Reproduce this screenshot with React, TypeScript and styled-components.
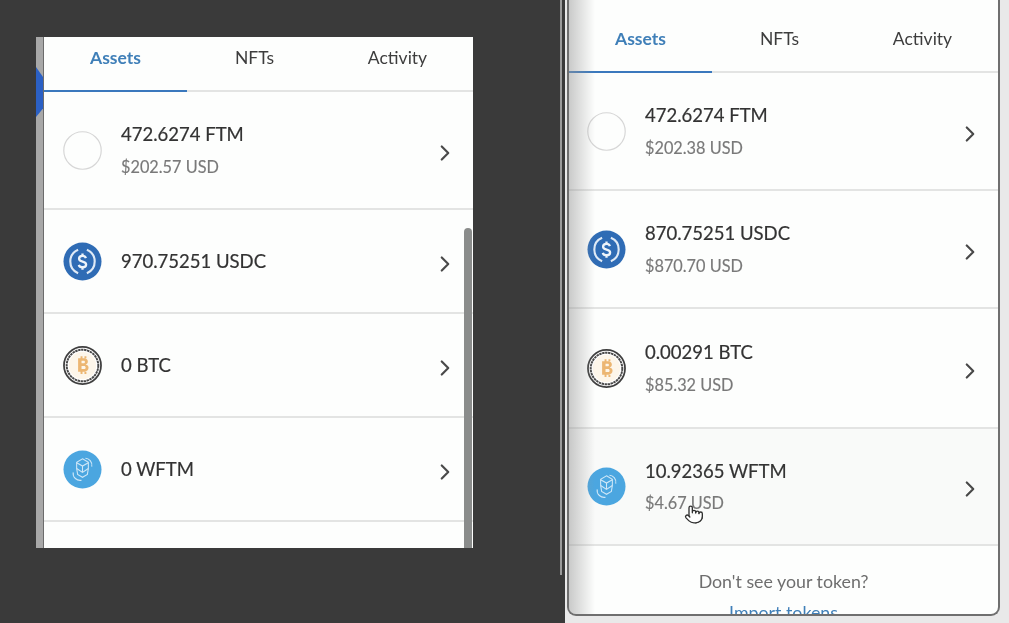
import React from "react";
import styled, { createGlobalStyle } from "styled-components";
import { ChevronRight, Pointer } from "lucide-react";

const Global = createGlobalStyle`
  html, body { margin: 0; padding: 0; width: 1009px; height: 623px; overflow: hidden; background: #3a3a3a; }
  body { font-family: "Lato", "Liberation Sans", sans-serif; }
`;

const Stage = styled.div`
  width: 1009px;
  height: 623px;
  display: flex;
  align-items: flex-start;
  overflow: hidden;
  background: #3a3a3a;
  filter: blur(0.35px);
`;

const LeftWindow = styled.div`
  position: relative;
  margin: 37px 0 0 36px;
  width: 437px;
  height: 511px;
  display: flex;
  background: #fdfefd;
  overflow: hidden;
`;

const Strip = styled.div`
  position: relative;
  flex: none;
  width: 8px;
  background: #a8a8a8;
  border-right: 1px solid #6c6c6c;
  box-sizing: border-box;
`;

const Blob = styled.div`
  position: absolute;
  left: 0;
  top: 30px;
  width: 7px;
  height: 50px;
  background: #2b60c4;
  clip-path: polygon(0 0, 100% 20%, 100% 83%, 0 100%);
`;

const Scrollbar = styled.div`
  position: absolute;
  right: 1px;
  top: 191px;
  bottom: 0;
  width: 8px;
  border-radius: 4px 4px 0 0;
  background: #8a8c8b;
`;

const Content = styled.div`
  flex: 1;
  min-width: 0;
`;

const Divider = styled.div`
  width: 2px;
  height: 575px;
  flex: none;
  margin-left: 87px;
  background: #9b9b9b;
`;

const RightSide = styled.div`
  flex: none;
  margin-left: 3px;
  width: 444px;
  height: 623px;
  background: #e9e9e9;
  padding-left: 2px;
  box-sizing: border-box;
`;

const RightWindow = styled.div`
  position: relative;
  width: 433px;
  height: 616px;
  box-sizing: border-box;
  background: #fdfefd;
  border: 2px solid #6f6f6f;
  border-top: none;
  border-radius: 0 0 9px 9px;
  overflow: hidden;
`;

const Shade = styled.div`
  position: absolute;
  left: 0;
  top: 0;
  bottom: 0;
  width: 26px;
  background: linear-gradient(90deg, rgba(150, 150, 150, 0.5), rgba(255, 255, 255, 0));
  pointer-events: none;
`;

const Tabs = styled.div<{ $h: number }>`
  display: grid;
  grid-template-columns: 143px 135px 1fr;
  height: ${(p) => p.$h}px;
  box-sizing: border-box;
  border-bottom: 2px solid #e3e4e3;
`;

const Tab = styled.div<{ $active?: boolean; $shift: number }>`
  display: flex;
  align-items: center;
  justify-content: center;
  box-sizing: border-box;
  padding-top: ${(p) => Math.max(p.$shift, 0)}px;
  padding-bottom: ${(p) => Math.max(-p.$shift, 0)}px;
  margin-bottom: -2px;
  font-size: 17.5px;
  color: ${(p) => (p.$active ? "#3f7fb8" : "#3d3d3d")};
  font-weight: ${(p) => (p.$active ? 700 : 400)};
  border-bottom: 2px solid ${(p) => (p.$active ? "#3a78bd" : "transparent")};
`;

const Row = styled.div<{ $h: number; $tint?: boolean; $pad: number }>`
  display: flex;
  align-items: center;
  height: ${(p) => p.$h}px;
  box-sizing: border-box;
  padding: 0 19px 0 ${(p) => p.$pad}px;
  gap: 19px;
  border-bottom: 2px solid #e3e4e3;
  background: ${(p) => (p.$tint ? "#f9faf9" : "transparent")};
`;

const TokenIcon = styled.svg`
  flex: none;
  width: 39px;
  height: 39px;
`;

const Info = styled.div`
  flex: 1;
  min-width: 0;
  display: flex;
  flex-direction: column;
  gap: 11.5px;
`;

const Amount = styled.div`
  font-size: 18.5px;
  line-height: 22px;
  color: #333;
  -webkit-text-stroke: 0.2px #333;
`;

const Usd = styled.div`
  font-size: 16.3px;
  line-height: 20px;
  color: #797979;
  -webkit-text-stroke: 0.15px #797979;
`;

const Arrow = styled(ChevronRight)`
  flex: none;
  width: 26px;
  height: 26px;
  color: #4a4a4a;
  margin: 5px -4px 0 0;
`;

const Footer = styled.div`
  display: flex;
  flex-direction: column;
  align-items: center;
  gap: 11px;
  padding-top: 25px;
`;

const Hint = styled.div`
  font-size: 17.8px;
  line-height: 20px;
  color: #6e6e6e;
`;

const Link = styled.div`
  font-size: 17.8px;
  line-height: 20px;
  color: #3f7fb8;
`;

const Cursor = styled(Pointer)`
  position: absolute;
  left: 115px;
  top: 503px;
  width: 20px;
  height: 23px;
  color: #2f2f2f;
  fill: #fff;
`;

const Fantom = () => (
  <TokenIcon viewBox="0 0 40 40">
    <circle cx="20" cy="20" r="19.5" fill="#4ba6e0" />
    <g fill="none" stroke="#cfe7f7" strokeWidth="1.1">
      <path d="M20 9l6 3.500v6.500l-1 6-5 3-5-3-1-6v-6.500z" />
      <path d="M14 13l6 3.500 6-3.500M20 16.500V23M14 19l6 4 6-4" />
      <path d="M10.500 23c-1 5 4 9 8.500 8M29.500 17c1-5-3-8.500-6.500-8.500" />
    </g>
  </TokenIcon>
);

const Usdc = () => (
  <TokenIcon viewBox="0 0 40 40">
    <circle cx="20" cy="20" r="19.5" fill="#2f6cb5" />
    <g fill="none" stroke="#dfeaf6" strokeWidth="2.200">
      <path d="M15.500 8a13 13 0 0 0 0 24" />
      <path d="M24.500 8a13 13 0 0 1 0 24" />
    </g>
    <path d="M23.500 16.500c-.5-1.400-1.800-2.200-3.500-2.200-2.100 0-3.500 1-3.500 2.800 0 4 7.200 2 7.200 6 0 1.800-1.600 2.800-3.700 2.800-1.900 0-3.300-.9-3.800-2.500M20 11.800v2.500M20 25.900v2.500" fill="none" stroke="#eef4fa" strokeWidth="2.400" />
  </TokenIcon>
);

const Bitcoin = () => (
  <TokenIcon viewBox="0 0 40 40">
    <circle cx="20" cy="20" r="19" fill="#fff" stroke="#3f3f3f" strokeWidth="1.800" />
    <circle cx="20" cy="20" r="16.200" fill="none" stroke="#4a4a4a" strokeWidth="2" strokeDasharray="2.500 .6" />
    <circle cx="20" cy="20" r="14" fill="#fdf6ea" />
    <path d="M15.500 12.500h6c2.600 0 4 1.300 4 3.400 0 1.600-.9 2.700-2.300 3.100 1.800.3 3 1.500 3 3.400 0 2.400-1.700 4-4.500 4h-6.200zM19 17.800h2c1 0 1.500-.5 1.500-1.400s-.5-1.400-1.500-1.400h-2zM19 23.700h2.500c1.100 0 1.700-.6 1.700-1.500s-.6-1.600-1.700-1.600H19zM18 10.500h2v2h-2zM22 10.500h2v2h-2zM18 26.400h2v2.400h-2zM22 26.400h2v2.400h-2z" fill="#ecb672" fillRule="evenodd" />
  </TokenIcon>
);

const Ftm = () => (
  <TokenIcon viewBox="0 0 40 40">
    <circle cx="20" cy="20" r="19.200" fill="#fdfefd" stroke="#d6d6d6" strokeWidth="1.200" />
  </TokenIcon>
);

const icons = { ftm: Ftm, usdc: Usdc, btc: Bitcoin, wftm: Fantom };

type TokenData = { icon: keyof typeof icons; amount: string; usd?: string; h: number; tint?: boolean };

const leftTokens: TokenData[] = [
  { icon: "ftm", amount: "472.6274 FTM", usd: "$202.57 USD", h: 118 },
  { icon: "usdc", amount: "970.75251 USDC", h: 104 },
  { icon: "btc", amount: "0 BTC", h: 104 },
  { icon: "wftm", amount: "0 WFTM", h: 104 },
];

const rightTokens: TokenData[] = [
  { icon: "ftm", amount: "472.6274 FTM", usd: "$202.38 USD", h: 118 },
  { icon: "usdc", amount: "870.75251 USDC", usd: "$870.70 USD", h: 118 },
  { icon: "btc", amount: "0.00291 BTC", usd: "$85.32 USD", h: 120 },
  { icon: "wftm", amount: "10.92365 WFTM", usd: "$4.67 USD", h: 117, tint: true },
];

const TokenList = ({ tokens, pad }: { tokens: TokenData[]; pad: number }) => (
  <>
    {tokens.map((t) => {
      const Icon = icons[t.icon];
      return (
        <Row key={t.amount} $h={t.h} $tint={t.tint} $pad={pad}>
          <Icon />
          <Info>
            <Amount>{t.amount}</Amount>
            {t.usd && <Usd>{t.usd}</Usd>}
          </Info>
          <Arrow strokeWidth={2} />
        </Row>
      );
    })}
  </>
);

const TabBar = ({ h, shift }: { h: number; shift: number }) => (
  <Tabs $h={h}>
    <Tab $active $shift={shift}>Assets</Tab>
    <Tab $shift={shift}>NFTs</Tab>
    <Tab $shift={shift}>Activity</Tab>
  </Tabs>
);

export default function App() {
  return (
    <Stage>
      <Global />
      <LeftWindow>
        <Strip>
          <Blob />
        </Strip>
        <Content>
          <TabBar h={55} shift={-12} />
          <TokenList tokens={leftTokens} pad={19} />
        </Content>
        <Scrollbar />
      </LeftWindow>
      <Divider />
      <RightSide>
        <RightWindow>
          <TabBar h={73} shift={6} />
          <TokenList tokens={rightTokens} pad={18} />
          <Footer>
            <Hint>Don't see your token?</Hint>
            <Link>Import tokens</Link>
          </Footer>
          <Shade />
          <Cursor strokeWidth={1.6} />
        </RightWindow>
      </RightSide>
    </Stage>
  );
}
